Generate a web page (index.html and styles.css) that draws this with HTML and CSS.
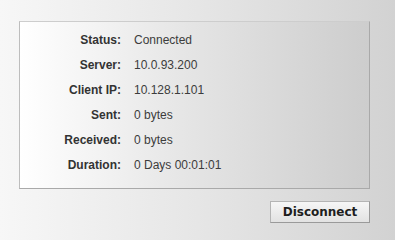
FILE: index.html
```html
<!DOCTYPE html>
<html lang="en">
<head>
    <meta charset="UTF-8">
    <title>VPN Status</title>
    <link rel="stylesheet" href="styles.css">
</head>
<body>
    <div class="panel">
        <div class="status-box">
            <div class="row"><span class="label">Status:</span><span class="value">Connected</span></div>
            <div class="row"><span class="label">Server:</span><span class="value">10.0.93.200</span></div>
            <div class="row"><span class="label">Client IP:</span><span class="value">10.128.1.101</span></div>
            <div class="row"><span class="label">Sent:</span><span class="value">0 bytes</span></div>
            <div class="row"><span class="label">Received:</span><span class="value">0 bytes</span></div>
            <div class="row"><span class="label">Duration:</span><span class="value">0 Days 00:01:01</span></div>
        </div>
        <div class="actions">
            <button class="btn">Disconnect</button>
        </div>
    </div>
</body>
</html>
```

FILE: styles.css
```css
html, body {
    margin: 0;
    padding: 0;
    height: 100%;
}
body {
    background: linear-gradient(to right, #f7f7f7 0%, #e6e6e6 50%, #d2d2d2 100%);
    font-family: "Liberation Sans", Arial, sans-serif;
    font-size: 12px;
    overflow: hidden;
}
.panel {
    padding: 21px 0 0 19px;
    width: 351px;
}
.status-box {
    height: 166px;
    box-sizing: border-box;
    height: 168px;
    border: 1px solid #a9a9a9;
    border-top-color: #cdcdcd;
    border-left-color: #bdbdbd;
    background: linear-gradient(to right, #ffffff 0%, #e4e4e4 50%, #cdcdcd 100%);
    padding-top: 5px;
}
.row {
    display: flex;
    align-items: center;
    height: 25px;
}
.label {
    width: 101px;
    text-align: right;
    font-weight: bold;
    color: #333;
}
.value {
    margin-left: 13px;
    color: #3c3c3c;
}
.actions {
    display: flex;
    justify-content: flex-end;
    margin-top: 12px;
}
.btn {
    width: 100px;
    height: 22px;
    padding: 0;
    border: 1px solid #9a9a9a;
    border-top-color: #b4b4b4;
    border-left-color: #b4b4b4;
    background: linear-gradient(to bottom, #f6f6f6, #e2e2e2);
    font-family: "DejaVu Sans", Verdana, sans-serif;
    font-weight: bold;
    font-size: 12px;
    color: #1e1e1e;
}
```
